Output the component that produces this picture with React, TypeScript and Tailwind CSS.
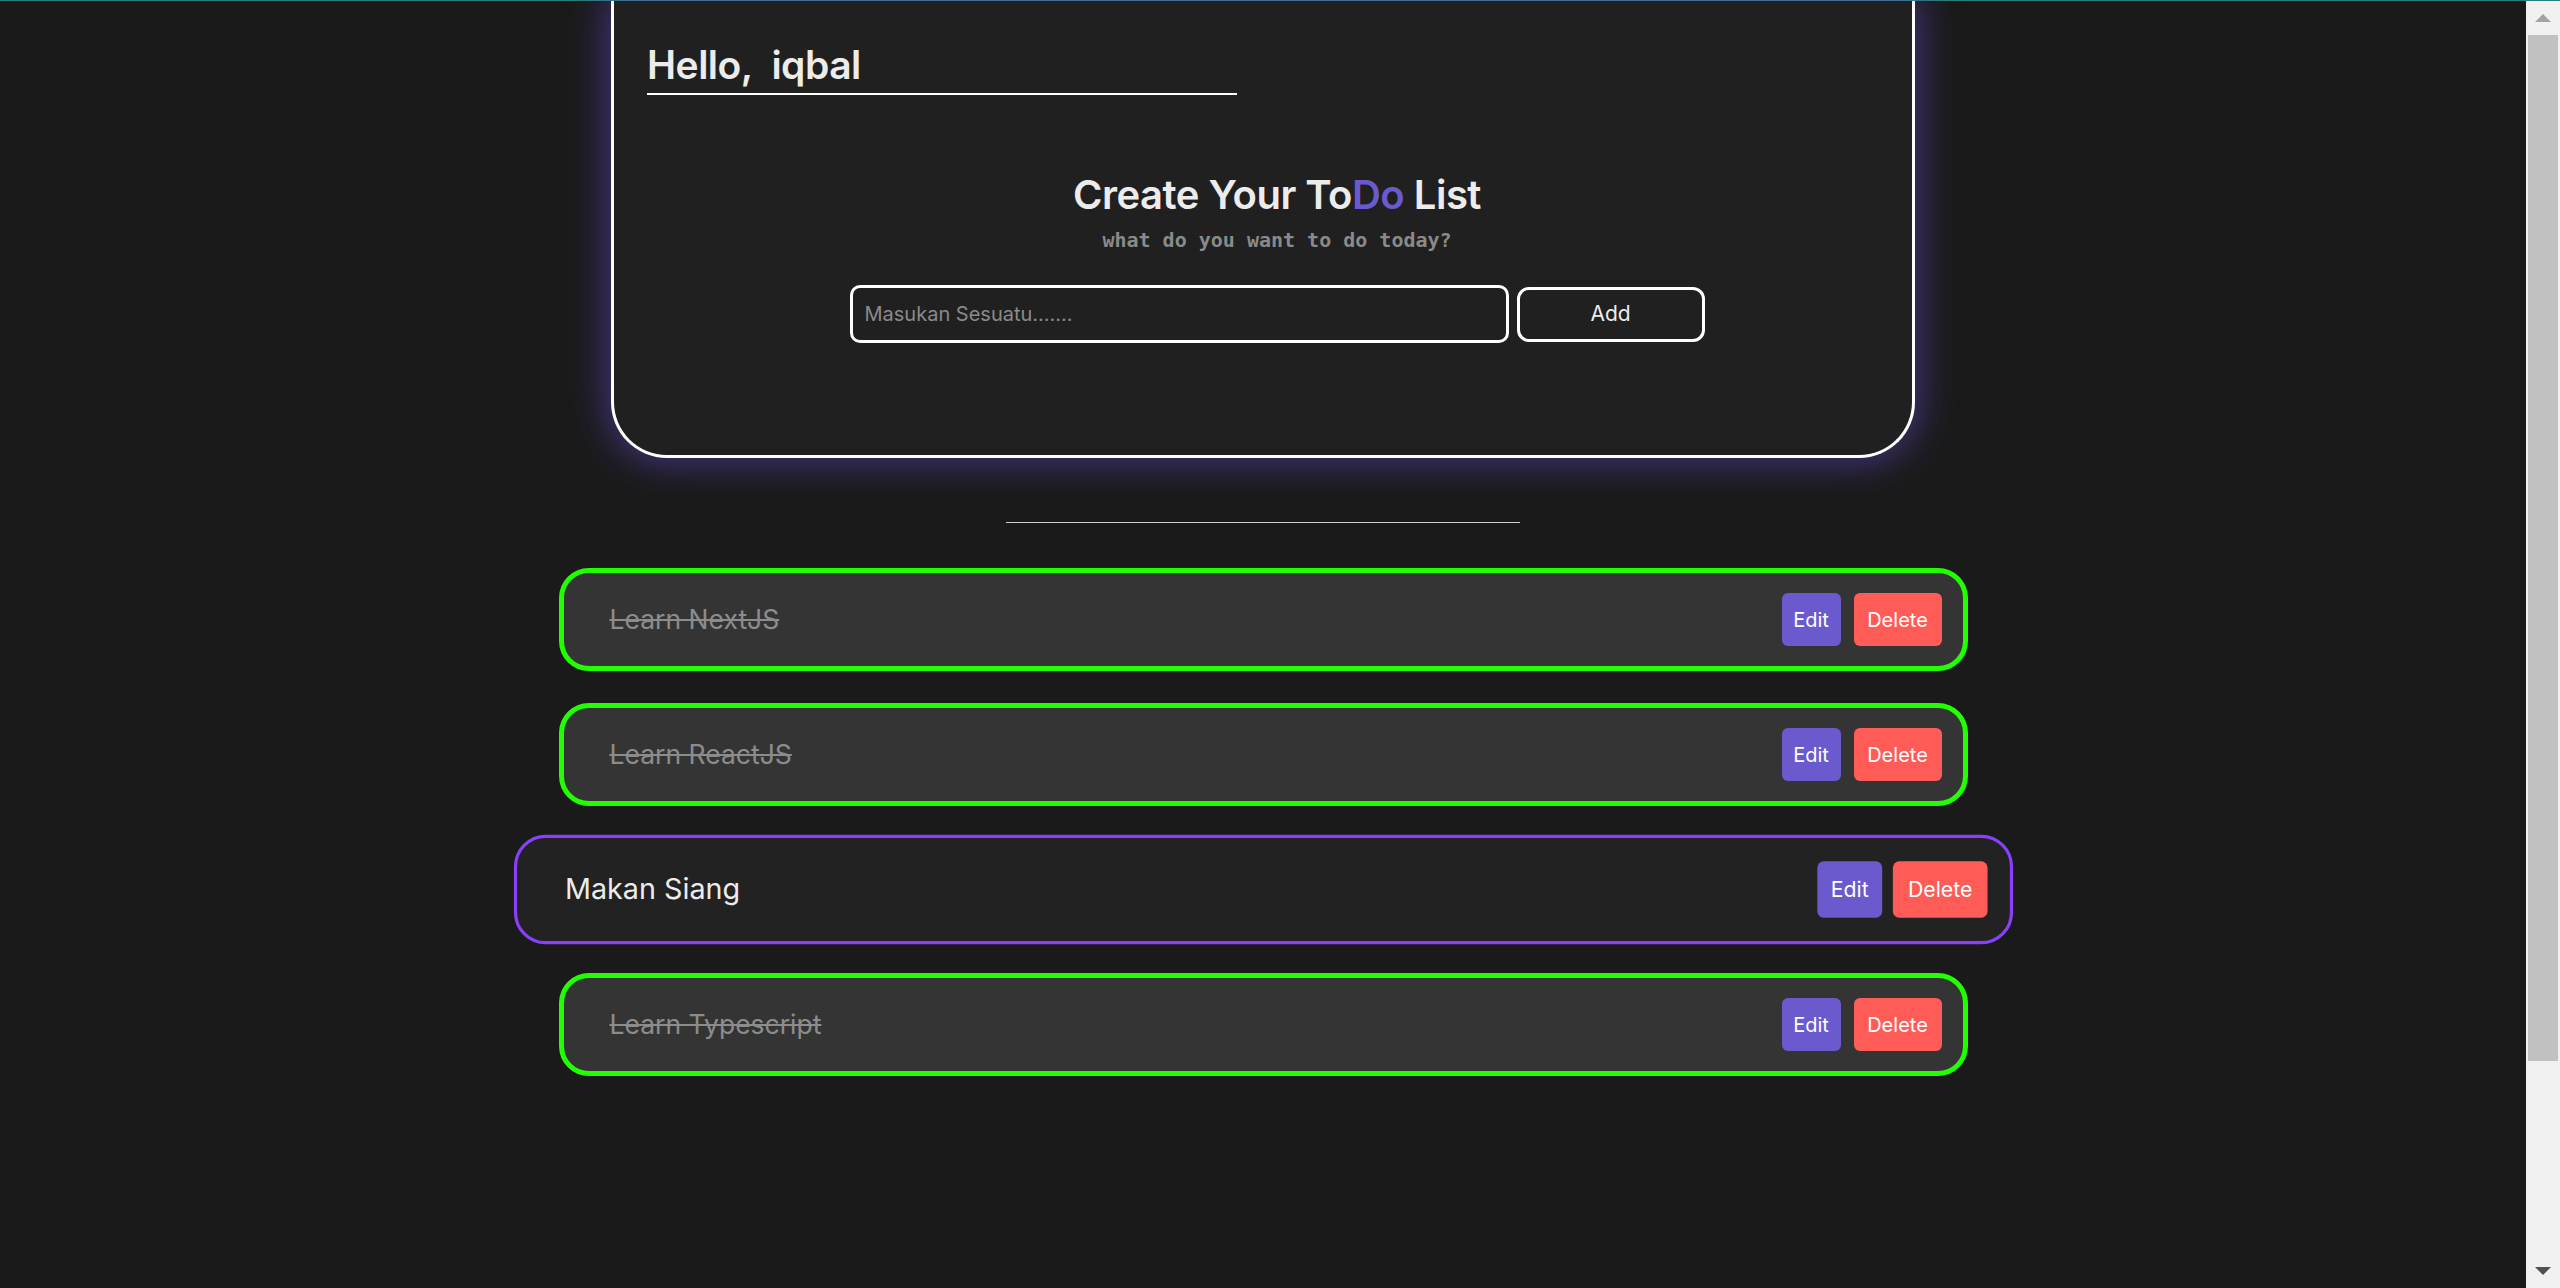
import React from "react";

const font = { fontFamily: "Inter, 'Noto Sans', Arial, sans-serif" };

type Item = { text: string; done: boolean; active?: boolean };

const items: Item[] = [
  { text: "Learn NextJS", done: true },
  { text: "Learn ReactJS", done: true },
  { text: "Makan Siang", done: false, active: true },
  { text: "Learn Typescript", done: true },
];

function Row({ item }: { item: Item }) {
  if (item.active) {
    return (
      <div className="w-[1409px] h-[103px] scale-[1.064] rounded-[30px] border-[3px] border-[#8a3ffc] bg-[#222222] flex items-center justify-between pl-[45px] pr-[21px]">
        <span className="text-[27px] text-[#ececec]">{item.text}</span>
        <div className="flex gap-[10px]">
          <button className="h-[53px] w-[61px] rounded-[6px] bg-[#6a5acd] text-white text-[20px]">Edit</button>
          <button className="h-[53px] w-[89px] rounded-[6px] bg-[#ff5c58] text-white text-[20px]">Delete</button>
        </div>
      </div>
    );
  }
  return (
    <div className="w-[1409px] h-[103px] rounded-[30px] border-[5px] border-[#22ff00] bg-[#343434] flex items-center justify-between pl-[46px] pr-[21px]">
      <span className="text-[26.5px] text-[#8c8c8c] line-through">{item.text}</span>
      <div className="flex gap-[13px]">
        <button className="h-[53px] w-[59px] rounded-[6px] bg-[#6a5acd] text-white text-[20px]">Edit</button>
        <button className="h-[53px] w-[88px] rounded-[6px] bg-[#ff5c58] text-white text-[20px]">Delete</button>
      </div>
    </div>
  );
}

export default function App() {
  return (
    <div className="w-full h-[1288px] overflow-hidden bg-[#1a1a1a] flex flex-col" style={font}>
      <div className="h-px w-full bg-[#2b7d7d]" />
      <div className="flex flex-1 min-h-0">
        <main className="flex-1 flex flex-col items-center">
          <section className="w-[1304px] h-[457px] border-x-[3px] border-b-[3px] border-white rounded-b-[56px] bg-[#202020] shadow-[0_0_36px_6px_rgba(105,75,210,0.5)] flex flex-col pl-[33px]">
            <h1 className="mt-[38px] w-[590px] border-b-2 border-white pb-[2px] text-[39px] leading-[52px] font-semibold text-[#ececec] tracking-[-0.5px]">
              Hello,&nbsp; iqbal
            </h1>
            <div className="flex flex-col items-center ml-[28px] mr-[33px] mt-[76px]">
              <h2 className="text-[40px] leading-[48px] font-semibold text-[#ececec] tracking-[-0.5px]">
                Create Your To<span className="text-[#6a5acd]">Do</span> List
              </h2>
              <p
                className="mt-[6px] text-[20px] font-bold text-[#8a8a8a]"
                style={{ fontFamily: "'DejaVu Sans Mono', 'Liberation Mono', monospace" }}
              >
                what do you want to do today?
              </p>
              <div className="mt-[30px] flex items-center gap-[8px]">
                <div className="w-[659px] h-[58px] rounded-[10px] border-[3px] border-white flex items-center pl-[12px]">
                  <span className="text-[20px] text-[#8a8a8a]">Masukan Sesuatu.......</span>
                </div>
                <button className="w-[188px] h-[55px] rounded-[12px] border-[3px] border-white text-[21px] text-[#ececec]">
                  Add
                </button>
              </div>
            </div>
          </section>
          <div className="mt-[64px] w-[514px] h-px bg-[#cfcfcf]" />
          <div className="mt-[45px] flex flex-col items-center gap-[32px]">
            {items.map((it) => (
              <Row key={it.text} item={it} />
            ))}
          </div>
        </main>
        <div className="w-[34px] bg-[#f1f1f1] flex flex-col items-center">
          <div className="h-[34px] flex items-center justify-center">
            <div className="w-0 h-0 border-x-[8px] border-x-transparent border-b-[8px] border-b-[#a3a3a3]" />
          </div>
          <div className="w-[30px] h-[1026px] bg-[#c1c1c1]" />
          <div className="flex-1" />
          <div className="h-[34px] flex items-center justify-center">
            <div className="w-0 h-0 border-x-[8px] border-x-transparent border-t-[8px] border-t-[#505050]" />
          </div>
        </div>
      </div>
    </div>
  );
}
